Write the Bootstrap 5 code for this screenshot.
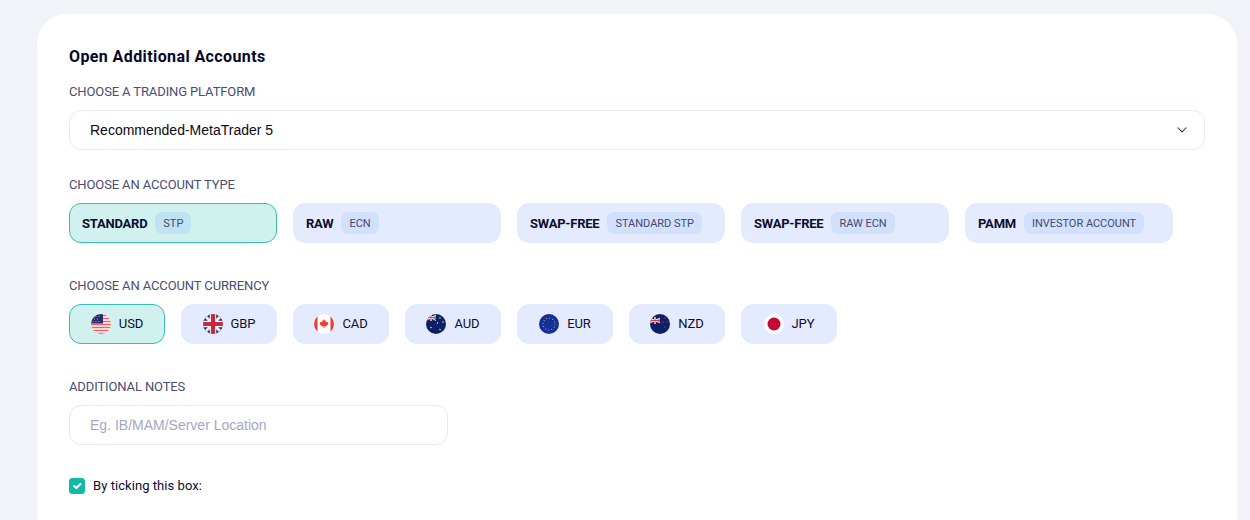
<!DOCTYPE html>
<html lang="en">
<head>
<meta charset="utf-8">
<title>Open Additional Accounts</title>
<link href="https://cdn.jsdelivr.net/npm/bootstrap@5.3.0/dist/css/bootstrap.min.css" rel="stylesheet">
<style>
html,body{height:520px;overflow:hidden}
body{background:#f2f3f8;font-family:Roboto,"Liberation Sans",sans-serif;color:#0b0d33}
.acct-panel{background:#fff;border-radius:30px 30px 0 0;margin:14px 13px 0 37px;padding:33px 32px 0;height:506px}
.acct-title{font-size:16px;font-weight:700;line-height:20px;color:#060828;margin:0 0 17px;letter-spacing:.4px}
.acct-label{display:block;font-size:13px;line-height:16px;color:#4a4d75;margin:0 0 10px;letter-spacing:-.12px;font-weight:400}
.acct-select{height:40px;border:1px solid #e3e9f9;border-radius:12px;font-family:"Liberation Sans",sans-serif;font-size:14px;color:#0a0a14;padding:0 40px 0 20px;background-position:right 14px center;background-image:url("data:image/svg+xml,%3csvg xmlns='http://www.w3.org/2000/svg' viewBox='0 0 16 16'%3e%3cpath fill='none' stroke='%232b2f55' stroke-linecap='round' stroke-linejoin='round' stroke-width='1.400' d='m2.500 5 5.500 5.500L13.500 5'/%3e%3c/svg%3e");margin-bottom:27px}
.acct-types{margin-bottom:35px}
.acct-cur{margin-bottom:35px}
.pick-btn{height:40px;border-radius:12px;background:#e5ebfe;border:1px solid #e5ebfe;color:#0b0d33;font-size:13px;display:flex;align-items:center;padding:0 12px}
.pick-btn:hover{background:#e5ebfe;border-color:#e5ebfe;color:#0b0d33}
.pick-type{width:208px;gap:8px}
.pick-cur{width:96px;justify-content:center;gap:8px;padding:0;letter-spacing:-.1px}
.pick-on,.pick-on:hover{background:#d0f1ee;border-color:#32c0b4}
.pick-name{font-weight:700;font-size:13px;letter-spacing:-.22px;padding-top:1px}
.pick-tag{background:#d1e0fd;border-radius:7px;font-size:11px;height:22px;line-height:24px;padding:0 8px;color:#454870;letter-spacing:-.02px}
.pick-on .pick-tag{background:#bfe3f2}
.flag{width:20px;height:20px;flex:none;display:block}
.acct-notes{width:379px;height:40px;border:1px solid #e3e9f9;border-radius:12px;font-family:"Liberation Sans",sans-serif;font-size:14px;padding:0 20px;margin-bottom:33px}
.acct-notes::placeholder{color:#a3a8c6;opacity:1}
.acct-check{display:flex;align-items:center;gap:8px;margin:0;padding:0;min-height:16px}
.acct-check .form-check-input{width:16px;height:16px;margin:0;float:none;border-radius:3px}
.acct-check .form-check-input:checked{background-color:#14b8a9;border-color:#14b8a9}
.acct-check .form-check-label{font-size:13px;line-height:16px;color:#0b0d33;letter-spacing:.06px}
</style>
</head>
<body>
<svg width="0" height="0" class="position-absolute">
<defs>
<clipPath id="c"><circle cx="10" cy="10" r="10"/></clipPath>
</defs>
</svg>
<main class="acct-panel">
<h1 class="acct-title">Open Additional Accounts</h1>
<label class="acct-label" for="platform">CHOOSE A TRADING PLATFORM</label>
<select class="form-select acct-select" id="platform"><option>Recommended-MetaTrader 5</option></select>

<div class="acct-label">CHOOSE AN ACCOUNT TYPE</div>
<div class="d-flex gap-3 acct-types">
<button type="button" class="btn pick-btn pick-type pick-on"><span class="pick-name">STANDARD</span><span class="pick-tag">STP</span></button>
<button type="button" class="btn pick-btn pick-type"><span class="pick-name">RAW</span><span class="pick-tag">ECN</span></button>
<button type="button" class="btn pick-btn pick-type"><span class="pick-name">SWAP-FREE</span><span class="pick-tag">STANDARD STP</span></button>
<button type="button" class="btn pick-btn pick-type"><span class="pick-name">SWAP-FREE</span><span class="pick-tag">RAW ECN</span></button>
<button type="button" class="btn pick-btn pick-type"><span class="pick-name">PAMM</span><span class="pick-tag">INVESTOR ACCOUNT</span></button>
</div>

<div class="acct-label">CHOOSE AN ACCOUNT CURRENCY</div>
<div class="d-flex gap-3 acct-cur">
<button type="button" class="btn pick-btn pick-cur pick-on">
<svg class="flag" viewBox="0 0 20 20"><g clip-path="url(#c)"><rect width="20" height="20" fill="#fff"/><path d="M0 1.500h20M0 4.500h20M0 7.500h20M0 10.500h20M0 13.500h20M0 16.500h20M0 19.500h20" stroke="#ee5f66" stroke-width="1.500"/><rect width="12" height="9.500" fill="#232c70"/><path d="M2 2.500h.01M5 2.500h.01M8 2.500h.01M3.500 5h.01M6.500 5h.01M2 7.500h.01M5 7.500h.01M8 7.500h.01" stroke="#cfd3ec" stroke-width="1" stroke-linecap="round"/></g></svg>
USD</button>
<button type="button" class="btn pick-btn pick-cur">
<svg class="flag" viewBox="0 0 20 20"><g clip-path="url(#c)"><rect width="20" height="20" fill="#1f2a6b"/><path d="M0 0L20 20M20 0L0 20" stroke="#f3e6e8" stroke-width="3"/><path d="M10 0V20M0 10H20" stroke="#fff" stroke-width="6.500"/><path d="M10 0V20M0 10H20" stroke="#c8283c" stroke-width="4.200"/></g></svg>
GBP</button>
<button type="button" class="btn pick-btn pick-cur">
<svg class="flag" viewBox="0 0 20 20"><g clip-path="url(#c)"><rect width="20" height="20" fill="#fff"/><rect width="3.500" height="20" fill="#ee3b33"/><rect x="16.500" width="3.500" height="20" fill="#ee3b33"/><path d="M10 5l.9 1.700 1-.5-.4 2.300 1.200-1 .3.800 1.400-.2-.5 1.500.6.300-2.200 1.800.2.900-2.100-.3V14h-.8v-1.700l-2.100.3.200-.9-2.200-1.800.6-.3-.5-1.500 1.400.2.300-.8 1.200 1-.4-2.300 1 .5z" fill="#ee3b33"/></g></svg>
CAD</button>
<button type="button" class="btn pick-btn pick-cur">
<svg class="flag" viewBox="0 0 20 20"><g clip-path="url(#c)"><rect width="20" height="20" fill="#0c2066"/><path d="M0 1L10 6.500M10 1L0 6.500" stroke="#f0b8bf" stroke-width="1.200"/><path d="M5 0V7M0 3.500H10" stroke="#fff" stroke-width="1.800"/><path d="M5 0V7M0 3.500H10" stroke="#d8344a" stroke-width=".9"/><path d="M5 13.500h.01M14 4h.01M17 8h.01M14 15.500h.01M11.500 9h.01" stroke="#fff" stroke-width="1.300" stroke-linecap="round"/></g></svg>
AUD</button>
<button type="button" class="btn pick-btn pick-cur">
<svg class="flag" viewBox="0 0 20 20"><g clip-path="url(#c)"><rect width="20" height="20" fill="#12309a"/><g fill="none" stroke="#c9a94a" stroke-width="1.100" stroke-linecap="round" stroke-dasharray=".1 3.040"><circle cx="10" cy="10" r="6"/></g></g></svg>
EUR</button>
<button type="button" class="btn pick-btn pick-cur">
<svg class="flag" viewBox="0 0 20 20"><g clip-path="url(#c)"><rect width="20" height="20" fill="#0c2066"/><path d="M0 4L10 9M10 4L0 9" stroke="#f0b8bf" stroke-width="1.200"/><path d="M5 3V10M0 6.500H10" stroke="#fff" stroke-width="2"/><path d="M5 3V10M0 6.500H10" stroke="#d8344a" stroke-width="1"/><path d="M15 4h.01M13 8h.01M17 8h.01M15 13h.01" stroke="#d8344a" stroke-width="1.300" stroke-linecap="round"/></g></svg>
NZD</button>
<button type="button" class="btn pick-btn pick-cur">
<svg class="flag" viewBox="0 0 20 20"><circle cx="10" cy="10" r="10" fill="#fff"/><circle cx="10" cy="10" r="6.500" fill="#c20a33"/></svg>
JPY</button>
</div>

<label class="acct-label" for="notes">ADDITIONAL NOTES</label>
<input class="form-control acct-notes" id="notes" type="text" placeholder="Eg. IB/MAM/Server Location">

<div class="form-check acct-check">
<input class="form-check-input" type="checkbox" id="tick" checked>
<label class="form-check-label" for="tick">By ticking this box:</label>
</div>
</main>
<script src="https://cdn.jsdelivr.net/npm/bootstrap@5.3.0/dist/js/bootstrap.bundle.min.js"></script>
</body>
</html>
